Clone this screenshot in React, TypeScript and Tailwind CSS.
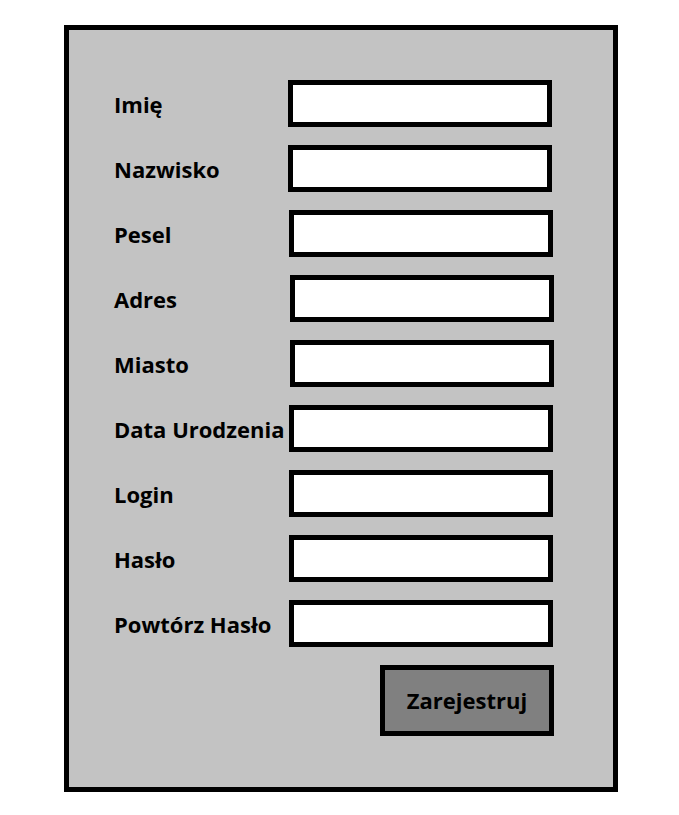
import React from 'react';

const fields = [
  { label: 'Imię', shift: 'ml-0' },
  { label: 'Nazwisko', shift: 'ml-0' },
  { label: 'Pesel', shift: 'ml-[1px]' },
  { label: 'Adres', shift: 'ml-[2px]' },
  { label: 'Miasto', shift: 'ml-[2px]' },
  { label: 'Data Urodzenia', shift: 'ml-[1px]' },
  { label: 'Login', shift: 'ml-[1px]' },
  { label: 'Hasło', shift: 'ml-[1px]' },
  { label: 'Powtórz Hasło', shift: 'ml-[1px]' },
];

const App = () => {
  return (
    <div className="min-h-screen bg-white pt-[25px] pl-[64px] font-['Open_Sans',sans-serif]">
      <div className="w-[554px] h-[767px] border-[5px] border-black bg-[#c3c3c3] pt-[50px] pl-[45px] flex flex-col gap-[18px]">
        {fields.map((f) => (
          <div key={f.label} className="flex items-center">
            <label className="w-[174px] whitespace-nowrap text-[22px] font-bold text-black pt-[2px]">
              {f.label}
            </label>
            <input
              type="text"
              className={`${f.shift} w-[264px] h-[47px] border-[5px] border-black bg-white outline-none`}
            />
          </div>
        ))}
        <div className="flex justify-end w-[440px]">
          <button
            type="button"
            className="w-[174px] h-[71px] border-[5px] border-black bg-[#808080] text-[22px] font-bold text-black"
          >
            Zarejestruj
          </button>
        </div>
      </div>
    </div>
  );
};

export default App;
